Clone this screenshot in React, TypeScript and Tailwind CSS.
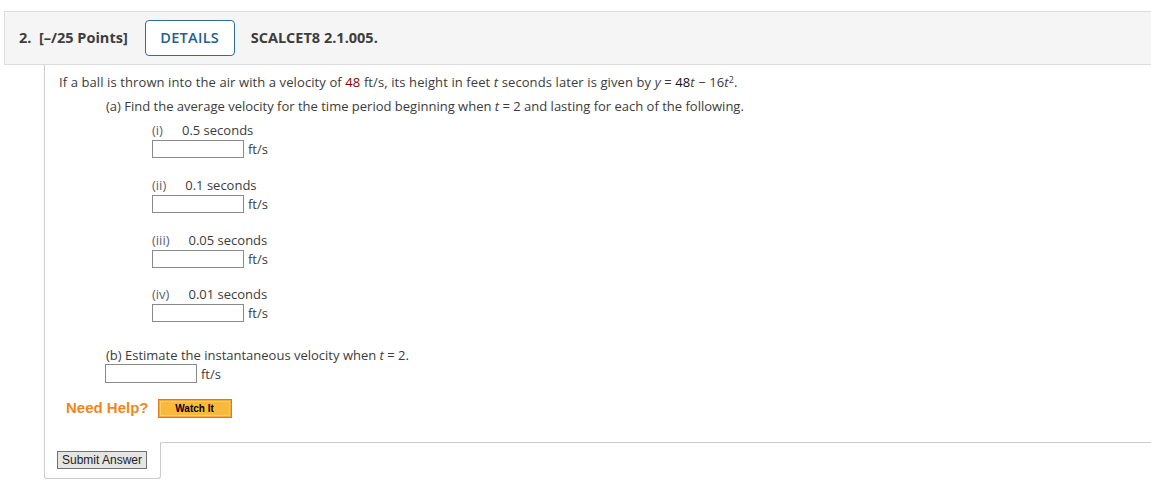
const body = "font-['Open_Sans',_'Liberation_Sans',_sans-serif]";

function AnswerBox({ indent }: { indent: string }) {
  return (
    <div className={`flex items-center ${indent} mt-px`}>
      <div className="w-[92px] h-[18px] border border-[#8a8a8a] bg-white" />
      <span className="ml-[4px] text-[13px] leading-[18px] text-[#3b3b3b]">ft/s</span>
    </div>
  );
}

function Part({ label, value, top }: { label: string; value: string; top: string }) {
  return (
    <div className={top}>
      <div className="flex ml-[93px] text-[13px] leading-[18px]">
        <span className="text-[#5b6270]">{label}</span>
        <span className="ml-[19px] text-[#3b3b3b]">{value}</span>
      </div>
      <AnswerBox indent="ml-[93px]" />
    </div>
  );
}

export default function App() {
  return (
    <div className={`w-[1151px] h-[487px] bg-white ${body} text-[#3b3b3b] pt-[11px]`}>
      <div className="ml-[4px] h-[54px] bg-[#f5f5f5] border-y border-l border-[#dddddd] flex items-center">
        <span className="ml-[14px] text-[14.5px] font-bold text-[#3d3d3d]">2.&nbsp; [–/25 Points]</span>
        <button
          type="button"
          className="ml-[17px] w-[90px] h-[36px] border border-[#2f6d9f] rounded-[4px] bg-white text-[14.5px] text-[#22618f] font-semibold tracking-[0.3px]"
        >
          DETAILS
        </button>
        <span className="ml-[16px] text-[14.5px] font-bold text-[#3d3d3d]">SCALCET8 2.1.005.</span>
      </div>

      <div className="ml-[44px] border-l border-[#cccccc] pl-[14px] pt-[8px] pb-[22px]">
        <p className="text-[13px] leading-[18px] tracking-[0.1px]">
          If a ball is thrown into the air with a velocity of <span className="text-[#8b0000]">48</span> ft/s, its height in feet{' '}
          <i>t</i> seconds later is given by <i>y</i> = <span className="text-[#111]">48</span><i>t</i> − 16<i>t</i>
          <sup className="text-[9px]">2</sup>.
        </p>
        <p className="mt-[6px] ml-[47px] text-[13px] leading-[18px]">
          (a) Find the average velocity for the time period beginning when <i>t</i> = 2 and lasting for each of the following.
        </p>

        <Part top="mt-[6px]" label="(i)" value="0.5 seconds" />
        <Part top="mt-[18px]" label="(ii)" value="0.1 seconds" />
        <Part top="mt-[18px]" label="(iii)" value="0.05 seconds" />
        <Part top="mt-[17px]" label="(iv)" value="0.01 seconds" />

        <div className="mt-[24px] ml-[47px]">
          <p className="text-[13px] leading-[18px]">
            (b) Estimate the instantaneous velocity when <i>t</i> = 2.
          </p>
          <div className="flex items-center -ml-px">
            <div className="w-[92px] h-[19px] border border-[#8a8a8a] bg-white" />
            <span className="ml-[4px] text-[13px] leading-[18px]">ft/s</span>
          </div>
        </div>

        <div className="mt-[14px] ml-[7px] flex items-center">
          <span className="font-['Liberation_Sans',_Arial,_sans-serif] text-[15px] font-bold text-[#f0871c]">Need Help?</span>
          <button
            type="button"
            className="ml-[9px] w-[74px] h-[19px] border border-[#d67d22] bg-[#f7a733] p-px"
          >
            <span className="block h-full border border-[#fcd26a] bg-[#fbb93c] font-['Liberation_Sans',_Arial,_sans-serif] text-[10px] leading-[13px] font-bold text-black">
              Watch It
            </span>
          </button>
        </div>
      </div>

      <div className="flex">
        <div className="ml-[44px] w-[117px] h-[37px] border-x border-b border-[#cccccc] rounded-b-[3px] pl-[12px] pt-[9px]">
          <button
            type="button"
            className="block w-[90px] h-[18px] border border-[#707070] bg-[#e5e5e5] font-['Liberation_Sans',_Arial,_sans-serif] text-[12px] leading-[16px] text-[#222]"
          >
            Submit Answer
          </button>
        </div>
        <div className="flex-1 border-t border-[#cccccc] rounded-tl-[3px]" />
      </div>
    </div>
  );
}
